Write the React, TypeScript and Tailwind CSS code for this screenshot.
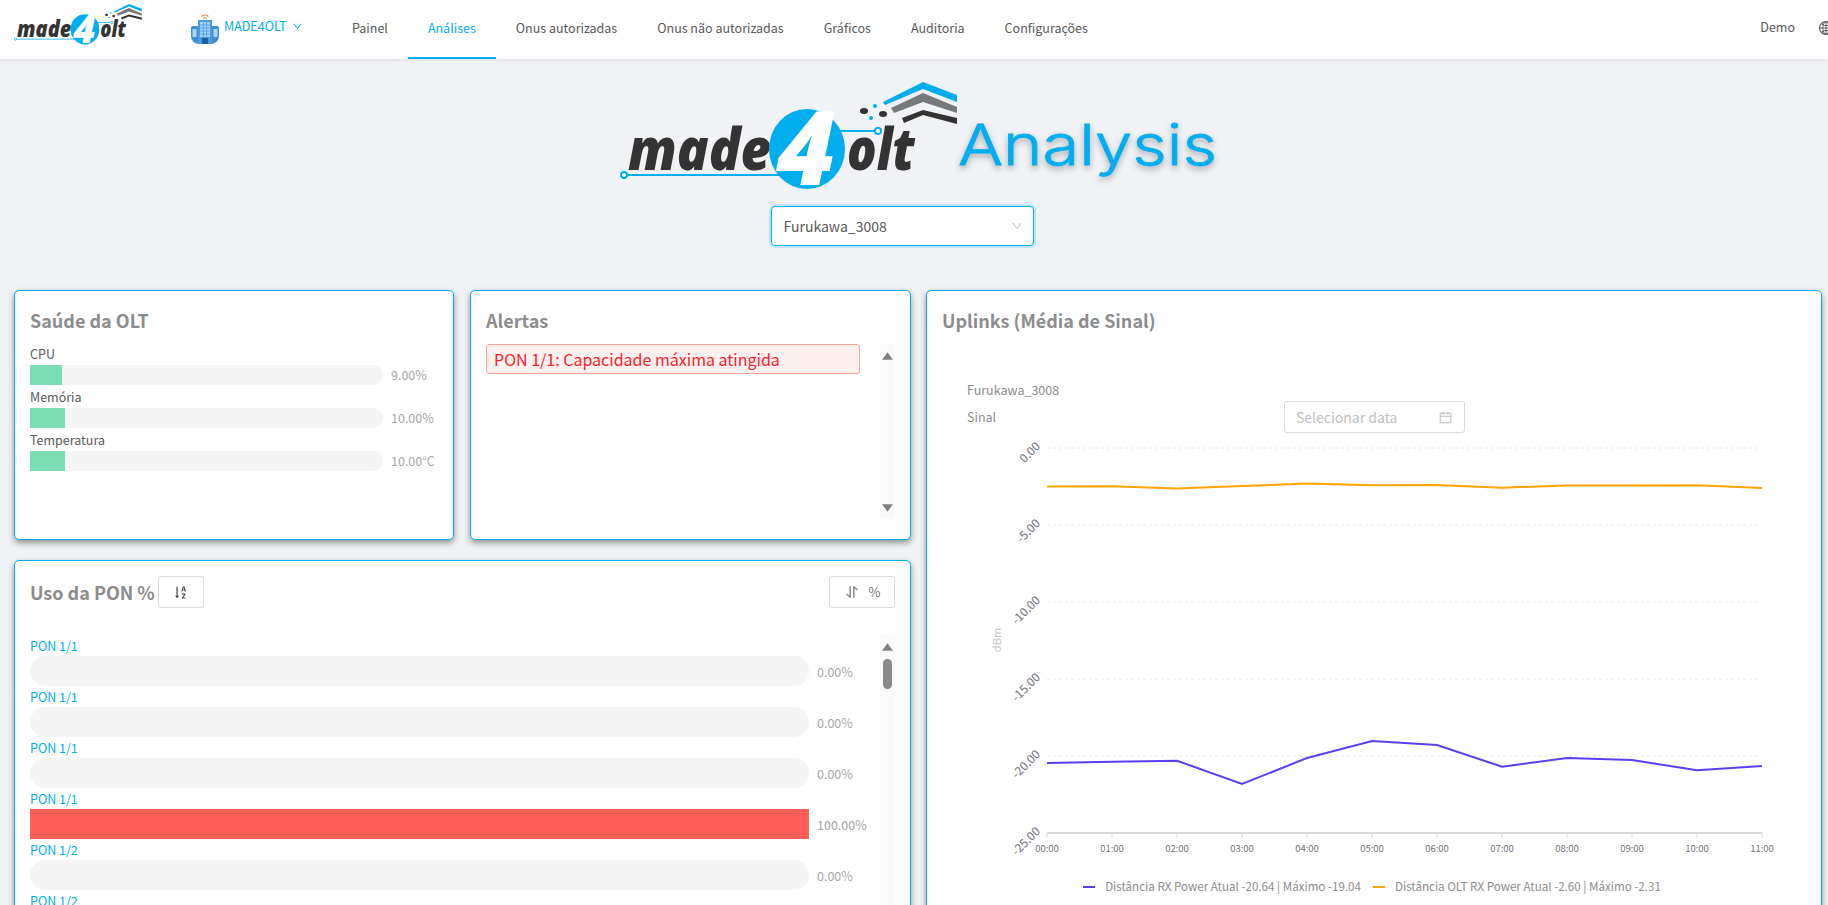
import { AiOutlineCalendar, AiOutlineDown, AiOutlineGlobal, AiOutlineSortAscending, AiOutlineSwap } from "react-icons/ai";

const navItems = ["Painel", "Análises", "Onus autorizadas", "Onus não autorizadas", "Gráficos", "Auditoria", "Configurações"];

const health = [
  { label: "CPU", pct: 9, value: "9.00%" },
  { label: "Memória", pct: 10, value: "10.00%" },
  { label: "Temperatura", pct: 10, value: "10.00°C" },
];

const pons = [
  { label: "PON 1/1", pct: 0 },
  { label: "PON 1/1", pct: 0 },
  { label: "PON 1/1", pct: 0 },
  { label: "PON 1/1", pct: 100 },
  { label: "PON 1/2", pct: 0 },
  { label: "PON 1/2", pct: 0 },
];

const hours = ["00:00", "01:00", "02:00", "03:00", "04:00", "05:00", "06:00", "07:00", "08:00", "09:00", "10:00", "11:00"];
const yTicks = ["0.00", "-5.00", "-10.00", "-15.00", "-20.00", "-25.00"];

const xAt = (i: number) => 1047 + i * 65;
const yAt = (i: number) => 448 + i * 77;
const orange = [486.5, 486.2, 488.6, 486, 483.6, 485.3, 485, 487.7, 485.4, 485.6, 485.3, 488];
const purple = [763, 761.7, 760.7, 784, 758, 741, 745, 766.7, 758, 760, 770.3, 766];
const toPoints = (ys: number[]) => ys.map((y, i) => `${xAt(i)},${y}`).join(" ");

function Logo({ className }: { className: string }) {
  return (
    <svg viewBox="0 0 340 110" className={className}>
      <line x1="3" y1="95" x2="160" y2="95" stroke="#00aeef" strokeWidth="2" />
      <circle cx="4" cy="95" r="3" fill="#fff" stroke="#00aeef" strokeWidth="2" />
      <line x1="215" y1="51" x2="257" y2="51" stroke="#00aeef" strokeWidth="2" />
      <circle cx="258" cy="51" r="3" fill="#fff" stroke="#00aeef" strokeWidth="2" />
      <text x="8" y="90" textLength="143" lengthAdjust="spacingAndGlyphs" fontFamily="'Open Sans', sans-serif" fontSize="58" fontWeight="800" fontStyle="italic" fill="#333333">
        made
      </text>
      <ellipse cx="187" cy="69" rx="38" ry="40" fill="#00aeef" />
      <text x="186" y="105" textAnchor="middle" fontFamily="'Open Sans', sans-serif" fontSize="102" fontWeight="800" fontStyle="italic" fill="#ffffff">
        4
      </text>
      <text x="227" y="90" textLength="68" lengthAdjust="spacingAndGlyphs" fontFamily="'Open Sans', sans-serif" fontSize="58" fontWeight="800" fontStyle="italic" fill="#333333">
        olt
      </text>
      <polygon points="263,22 303,2 337,15 337,22 303,9 265,25" fill="#00aeef" />
      <polygon points="271,28 303,13 337,27 337,33 303,22 274,33" fill="#77787b" />
      <polygon points="282,38 303,30 337,38 337,44 303,35 284,43" fill="#333333" />
      <ellipse cx="244" cy="31" rx="4" ry="3" fill="#333333" />
      <ellipse cx="263" cy="34" rx="4" ry="3" fill="#333333" />
      <circle cx="255" cy="26" r="2" fill="#00aeef" />
      <circle cx="251" cy="38" r="2" fill="#00aeef" />
    </svg>
  );
}

function BuildingIcon() {
  return (
    <svg viewBox="0 0 28 31" className="w-[28px] h-[31px]">
      <path d="M10.5 3.5a5 5 0 0 1 7 0" fill="none" stroke="#f0803c" strokeWidth="1.3" />
      <path d="M12 5.5a3 3 0 0 1 4 0" fill="none" stroke="#f5b83d" strokeWidth="1.2" />
      <path d="M0 15a2 2 0 0 1 2-2h24a2 2 0 0 1 2 2v8a8 8 0 0 1-8 8H8a8 8 0 0 1-8-8z" fill="#3f8fd6" />
      <rect x="7" y="7" width="14" height="24" fill="#4a9be0" />
      <rect x="9" y="9" width="10" height="15" fill="#a8d4f5" />
      <path d="M9 12h10M9 15h10M9 18h10M9 21h10M12.3 9v15M15.6 9v15" stroke="#4a9be0" strokeWidth="0.8" />
      <rect x="11" y="25" width="6" height="6" fill="#1f5f9e" />
      <rect x="1.5" y="16" width="4" height="8" fill="#a8d4f5" />
      <rect x="22.5" y="16" width="4" height="8" fill="#a8d4f5" />
    </svg>
  );
}

function Card({ title, className, children }: { title?: string; className: string; children: React.ReactNode }) {
  return (
    <div className={`bg-white border border-[#00aeef] rounded-[5px] shadow-[0_3px_6px_rgba(0,0,0,0.4)] ${className}`}>
      {title && <h2 className="text-[18px] leading-[26px] font-bold text-[#8c8c8c]">{title}</h2>}
      {children}
    </div>
  );
}

function ScrollTrack({ className, thumb }: { className: string; thumb?: boolean }) {
  return (
    <div className={`w-[15px] bg-[#fafafa] flex flex-col items-center justify-between ${className}`}>
      <div className="flex flex-col items-center">
        <svg viewBox="0 0 10 7" className="w-[11px] h-[8px] mt-[8px]">
          <polygon points="5,0 10,7 0,7" fill="#808080" />
        </svg>
        {thumb && <div className="w-[9px] h-[30px] rounded-[5px] bg-[#8a8a8a] mt-[8px]" />}
      </div>
      <svg viewBox="0 0 10 7" className="w-[11px] h-[8px] mb-[7px]">
        <polygon points="0,0 10,0 5,7" fill="#808080" />
      </svg>
    </div>
  );
}

export default function App() {
  return (
    <div className="w-full h-[905px] overflow-hidden bg-[#f0f2f5] font-['Noto_Sans_CJK_SC','Noto_Sans',sans-serif] text-[12.5px]">
      <header className="h-[59px] bg-white shadow-[0_1px_4px_rgba(0,0,0,0.08)] flex items-center pl-[14px] relative">
        <Logo className="w-[129px] h-[42px] mb-[11px]" />
        <div className="ml-[48px] flex items-center gap-[5px] w-[128px] pb-[2px]">
          <BuildingIcon />
          <span className="text-[#00aeef] mb-[5px]">MADE4OLT</span>
          <AiOutlineDown className="text-[#00aeef] w-[11px] h-[11px] mb-[4px]" />
        </div>
        <nav className="flex h-full ml-[13px]">
          {navItems.map((item) => (
            <a
              key={item}
              className={
                item === "Análises"
                  ? "h-full px-[20px] flex items-center text-[#00aeef] border-b-2 border-[#00aeef]"
                  : "h-full px-[20px] flex items-center text-[#595959] border-b-2 border-transparent"
              }
            >
              {item}
            </a>
          ))}
        </nav>
        <div className="ml-auto flex items-center gap-[23px] mr-[-6px] text-[#595959] pb-[4px]">
          <span>Demo</span>
          <AiOutlineGlobal className="w-[16px] h-[16px]" />
        </div>
      </header>

      <section className="flex flex-col items-center h-[231px] pt-[21px]">
        <div className="flex items-start ml-[12px]">
          <Logo className="w-[340px] h-[110px] mr-[-4px]" />
          <svg viewBox="0 0 264 90" className="w-[264px] h-[90px] mt-[23px] drop-shadow-[0_3px_3px_rgba(0,0,0,0.3)]">
            <text x="2" y="62" textLength="259" lengthAdjust="spacingAndGlyphs" fontFamily="Inter, sans-serif" fontSize="56" fontWeight="300" fill="#00aeef" stroke="#00aeef" strokeWidth="0.8">
              Analysis
            </text>
          </svg>
        </div>
        <div className="mt-[13px] mr-[24px] w-[263px] h-[40px] bg-white border border-[#00aeef] rounded-[4px] shadow-[0_0_0_2px_rgba(0,174,239,0.2)] flex items-center justify-between pl-[12px] pr-[10px] text-[14px] text-[#595959]">
          <span>Furukawa_3008</span>
          <AiOutlineDown className="w-[12px] h-[12px] text-[#bfbfbf]" />
        </div>
      </section>

      <main className="grid grid-cols-[897px_896px] gap-x-[15px] pl-[14px]">
        <div className="flex flex-col gap-[20px]">
          <div className="grid grid-cols-[440px_441px] gap-x-[16px]">
            <Card title="Saúde da OLT" className="h-[250px] pt-[16px] pl-[15px]">
              <div className="mt-[11px]">
                {health.map((row) => (
                  <div key={row.label} className="mb-[2px]">
                    <div className="h-[21px] leading-[19px] text-[#595959]">{row.label}</div>
                    <div className="flex items-center gap-[8px]">
                      <div className="w-[353px] h-[20px] rounded-full bg-[#f5f5f5]">
                        <div className="h-full bg-[#7bdeb2]" style={{ width: `${row.pct}%` }} />
                      </div>
                      <span className="text-[#a6a6a6]">{row.value}</span>
                    </div>
                  </div>
                ))}
              </div>
            </Card>
            <Card title="Alertas" className="h-[250px] pt-[16px] pl-[15px]">
              <div className="flex mt-[11px]">
                <div className="w-[374px] h-[30px] bg-[#fff1f0] border border-[#ffa39e] rounded-[3px] px-[7px] leading-[28px] text-[16px] text-[#f5222d]">
                  PON 1/1: Capacidade máxima atingida
                </div>
                <ScrollTrack className="ml-[20px] h-[175px]" />
              </div>
            </Card>
          </div>

          <Card className="h-[500px] pt-[15px] pl-[15px] pr-[15px]">
            <div className="flex items-center justify-between">
              <div className="flex items-center gap-[3px]">
                <h2 className="text-[18px] leading-[26px] font-bold text-[#8c8c8c]">Uso da PON %</h2>
                <button className="w-[46px] h-[32px] border border-[#d9d9d9] rounded-[3px] flex items-center justify-center text-[#444]">
                  <AiOutlineSortAscending className="w-[17px] h-[17px]" />
                </button>
              </div>
              <button className="w-[66px] h-[32px] border border-[#d9d9d9] rounded-[3px] flex items-center justify-center gap-[9px] text-[#737373] text-[13px]">
                <AiOutlineSwap className="w-[16px] h-[16px] rotate-90" />
                <span>%</span>
              </button>
            </div>
            <div className="flex mt-[27px]">
              <div className="w-[850px]">
                {pons.map((pon, i) => (
                  <div key={i} className="h-[51px]">
                    <div className="h-[21px] leading-[21px] text-[#00aeef]">{pon.label}</div>
                    <div className="flex items-center gap-[8px]">
                      <div className="w-[779px] h-[30px] rounded-full bg-[#f5f5f5]">
                        <div className="h-full bg-[#ff5f58]" style={{ width: `${pon.pct}%` }} />
                      </div>
                      <span className="text-[#a6a6a6] pt-[2px]">{pon.pct.toFixed(2)}%</span>
                    </div>
                  </div>
                ))}
              </div>
              <ScrollTrack thumb className="h-[300px]" />
            </div>
          </Card>
        </div>

        <Card title="Uplinks (Média de Sinal)" className="h-[640px] pt-[16px] pl-[15px]">
          <div className="pl-[25px] mt-[47px] text-[#8c8c8c] leading-[20px]">Furukawa_3008</div>
          <div className="flex items-center h-[32px] mt-[1px]">
            <span className="w-[342px] pl-[25px] text-[#8c8c8c]">Sinal</span>
            <div className="w-[181px] h-[32px] border border-[#d9d9d9] rounded-[3px] flex items-center justify-between px-[11px] text-[14px] text-[#bfbfbf]">
              <span>Selecionar data</span>
              <AiOutlineCalendar className="w-[15px] h-[15px]" />
            </div>
          </div>
          <svg viewBox="990 440 800 420" className="w-[800px] h-[420px] ml-[48px] mt-[7px] font-['Noto_Sans_CJK_SC','Noto_Sans',sans-serif]">
            {yTicks.map((tick, i) =>
              i < 5 ? <line key={tick} x1="1047" x2="1762" y1={yAt(i)} y2={yAt(i)} stroke="#e8e8e8" strokeWidth="1" strokeDasharray="3 3" /> : null,
            )}
            {yTicks.map((tick, i) => (
              <text key={tick} x="1041" y={yAt(i) - 1} textAnchor="end" fontSize="12" fill="#6e7079" transform={`rotate(-45 1041 ${yAt(i) - 1})`}>
                {tick}
              </text>
            ))}
            <text x="1001" y="640" textAnchor="middle" fontSize="11" fill="#bfbfbf" transform="rotate(-90 1001 640)">
              dBm
            </text>
            <line x1="1047" x2="1762" y1="833" y2="833" stroke="#d9d9d9" strokeWidth="2" />
            {hours.map((h, i) => (
              <g key={h}>
                <line x1={xAt(i)} x2={xAt(i)} y1="833" y2="838" stroke="#d9d9d9" />
                <text x={xAt(i)} y="852" textAnchor="middle" fontSize="9.5" fill="#6e7079">
                  {h}
                </text>
              </g>
            ))}
            <polyline points={toPoints(orange)} fill="none" stroke="#ffa500" strokeWidth="2" />
            <polyline points={toPoints(purple)} fill="none" stroke="#5b3ff2" strokeWidth="2" />
          </svg>
          <div className="flex items-center justify-center gap-[12px] w-[860px] mt-[18px] text-[11.6px] text-[#8c8c8c]">
            <div className="flex items-center gap-[10px]">
              <span className="w-[12px] h-[2px] bg-[#5b3ff2]" />
              <span>Distância RX Power Atual -20.64 | Máximo -19.04</span>
            </div>
            <div className="flex items-center gap-[10px]">
              <span className="w-[12px] h-[2px] bg-[#ffa500]" />
              <span>Distância OLT RX Power Atual -2.60 | Máximo -2.31</span>
            </div>
          </div>
        </Card>
      </main>
    </div>
  );
}
